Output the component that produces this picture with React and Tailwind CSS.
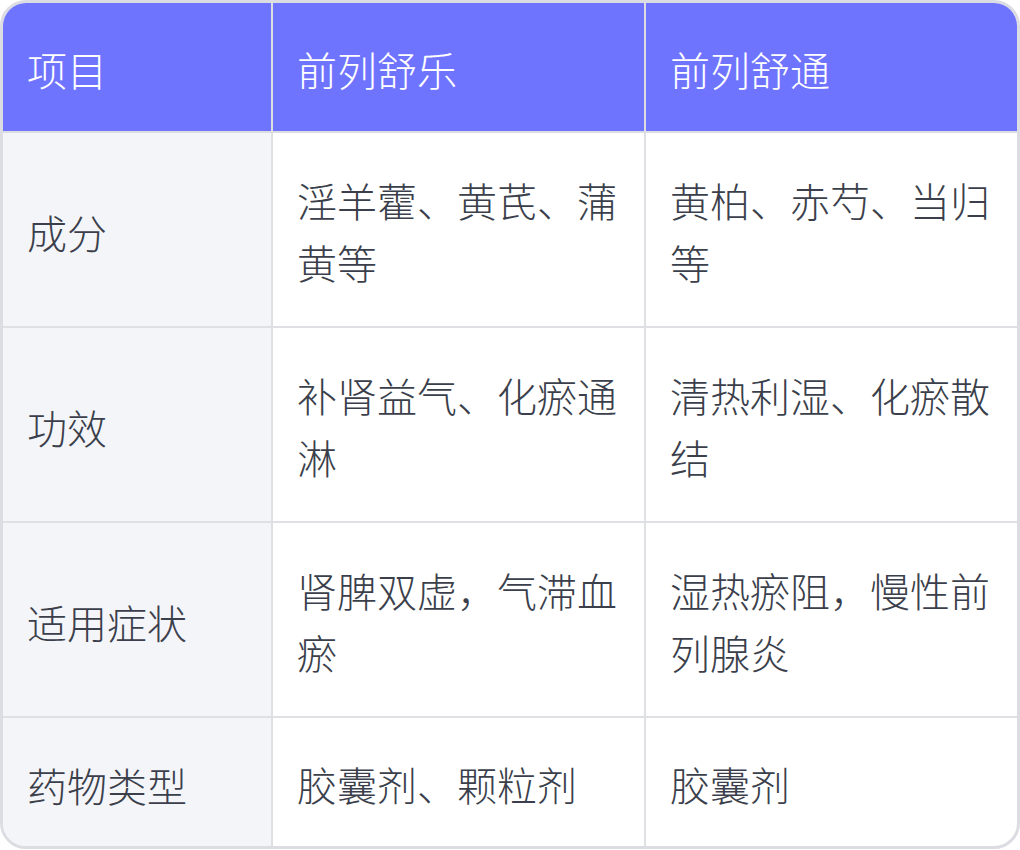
import React from "react";

const rows = [
  ["成分", "淫羊藿、黄芪、蒲黄等", "黄柏、赤芍、当归等"],
  ["功效", "补肾益气、化瘀通淋", "清热利湿、化瘀散结"],
  ["适用症状", "肾脾双虚，气滞血瘀", "湿热瘀阻，慢性前列腺炎"],
  ["药物类型", "胶囊剂、颗粒剂", "胶囊剂"],
];

export default function App() {
  return (
    <div
      className="w-[1020px] h-[850px] bg-white"
      style={{ fontFamily: '"Noto Sans CJK SC", "Noto Sans", sans-serif' }}
    >
      <div className="w-[1020px] overflow-hidden rounded-[26px] border-[3px] border-[#dcdde2] text-[40px] font-light leading-[62px] text-[#3b3f4b]">
        <div className="grid grid-cols-[270px_373px_1fr] bg-[#6f74ff] text-white">
          <div className="border-r-2 border-b-2 border-[#dcdde2] pt-[35px] pb-[31px] pl-6 pr-6">项目</div>
          <div className="border-r-2 border-b-2 border-[#dcdde2] pt-[35px] pb-[31px] pl-6 pr-6">前列舒乐</div>
          <div className="border-b-2 border-[#dcdde2] pt-[35px] pb-[31px] pl-6 pr-6">前列舒通</div>
        </div>
        {rows.map((r, i) => {
          const last = i === rows.length - 1;
          return (
            <div key={i} className="grid grid-cols-[270px_373px_1fr]">
              <div
                className={`flex items-center bg-[#f4f5f9] border-r-2 border-[#dfe0e4] pt-[5px] pl-6 pr-6 ${last ? "" : "border-b-2"}`}
              >
                {r[0]}
              </div>
              <div
                className={`border-r-2 border-[#dfe0e4] pl-6 pr-6 ${last ? "pt-[35px] pb-[31px]" : "border-b-2 pt-[35.5px] pb-[33.5px]"}`}
              >
                {r[1]}
              </div>
              <div
                className={`border-[#dfe0e4] pl-6 pr-6 ${last ? "pt-[35px] pb-[31px]" : "border-b-2 pt-[35.5px] pb-[33.5px]"}`}
              >
                {r[2]}
              </div>
            </div>
          );
        })}
      </div>
    </div>
  );
}
